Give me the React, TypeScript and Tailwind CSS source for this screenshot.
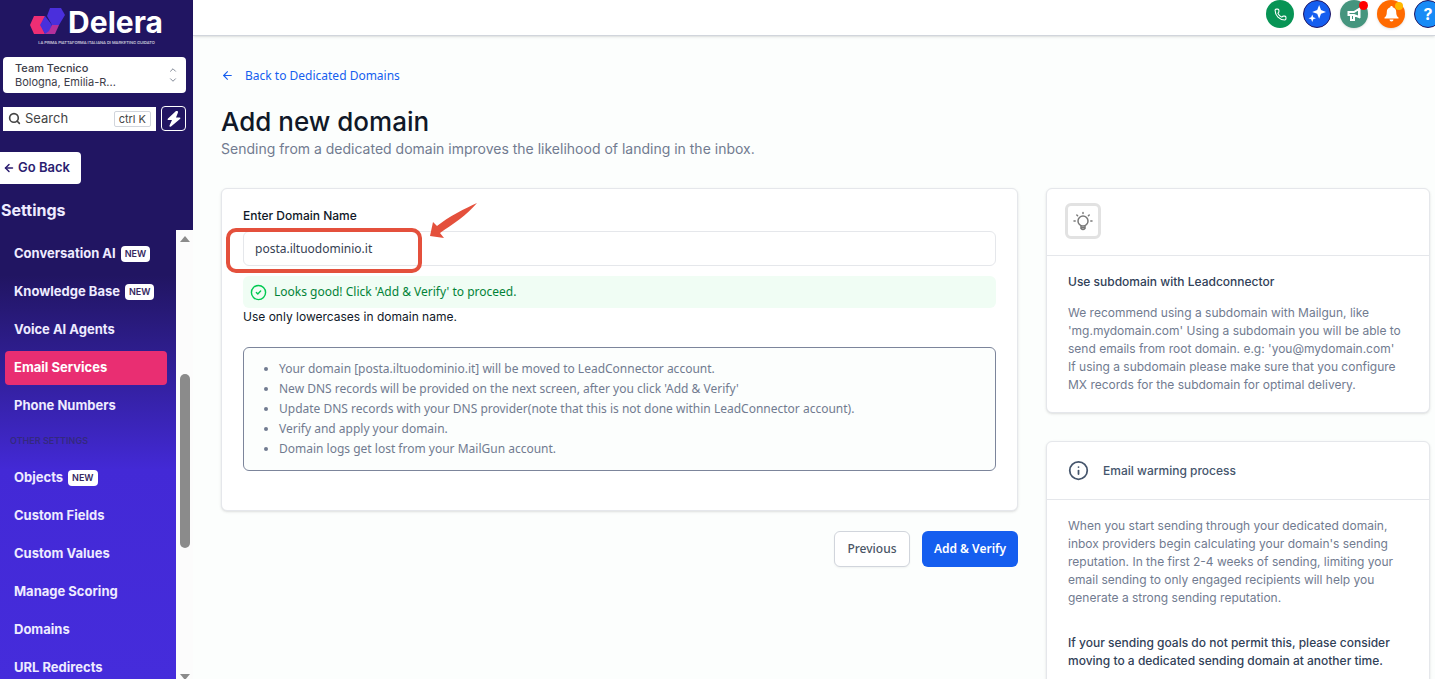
import type { ReactNode } from 'react'
import { ArrowLeft, ChevronDown, ChevronUp, CircleCheck, Info, Phone, Search } from 'lucide-react'

type NavItem = { label: string; isNew?: boolean; active?: boolean }

const MAIN_NAV: NavItem[] = [
  { label: 'Conversation AI', isNew: true },
  { label: 'Knowledge Base', isNew: true },
  { label: 'Voice AI Agents' },
  { label: 'Email Services', active: true },
  { label: 'Phone Numbers' },
]

const OTHER_NAV: NavItem[] = [
  { label: 'Objects', isNew: true },
  { label: 'Custom Fields' },
  { label: 'Custom Values' },
  { label: 'Manage Scoring' },
  { label: 'Domains' },
  { label: 'URL Redirects' },
]

const NOTES = [
  'Your domain [posta.iltuodominio.it] will be moved to LeadConnector account.',
  "New DNS records will be provided on the next screen, after you click 'Add & Verify'",
  'Update DNS records with your DNS provider(note that this is not done within LeadConnector account).',
  'Verify and apply your domain.',
  'Domain logs get lost from your MailGun account.',
]

function Logo() {
  return (
    <div className="flex flex-col items-center w-[134px] mx-auto">
      <div className="flex items-center gap-[3px]">
        <svg width="35" height="28" viewBox="0 0 35 28" className="shrink-0" aria-hidden="true">
          <path d="M20 0h11l4 7-6 10h-7l-5-9z" fill="#4a2fdc" />
          <path d="M4 8h11l-4 9 4 9H4L0 17z" fill="#ee2e74" />
          <path d="M22 17h7l-4 9H14z" fill="#b3309c" />
          <path d="M15 8l7 9-3 6-4 3-5-9z" fill="#4a2fdc" />
        </svg>
        <span className="text-[30px] leading-7 font-bold text-white">Delera</span>
      </div>
      <span className="mt-1 whitespace-nowrap text-[4px] leading-[6px] font-medium text-white/80">
        LA PRIMA PIATTAFORMA ITALIANA DI MARKETING GUIDATO
      </span>
    </div>
  )
}

function NavList({ items }: { items: NavItem[] }) {
  return (
    <ul className="flex flex-col gap-1 pl-[5px] pr-[9px]">
      {items.map(item => (
        <li key={item.label}>
          <a
            href="#"
            className={`flex items-center gap-[5px] h-[34px] pl-[9px] rounded text-[13px] font-bold whitespace-nowrap ${
              item.active ? 'bg-[#e92e72] text-white' : 'text-[#eeebff]'
            }`}
          >
            {item.label}
            {item.isNew && (
              <span className="h-4 px-1 rounded bg-white text-[#35285f] text-[9px] leading-4 font-semibold">NEW</span>
            )}
          </a>
        </li>
      ))}
    </ul>
  )
}

function Sidebar() {
  return (
    <aside className="w-[193px] shrink-0 flex flex-col bg-[#211562] font-[Inter,sans-serif]">
      <div className="h-[230px] shrink-0 pt-2">
        <Logo />
        <button className="mt-[11px] ml-[3px] w-[183px] h-9 pl-3 pr-2 flex items-center justify-between rounded bg-white text-left text-[#3c3c48]">
          <span className="text-[11px] leading-[14px]">
            <span className="block font-medium">Team Tecnico</span>
            <span className="block">Bologna, Emilia-R...</span>
          </span>
          <span className="flex flex-col text-gray-500">
            <ChevronUp size={10} />
            <ChevronDown size={10} />
          </span>
        </button>
        <div className="mt-[13px] ml-[3px] flex items-center gap-[5px]">
          <label className="w-[153px] h-6 px-[5px] flex items-center gap-1 bg-white text-[#444]">
            <Search size={13} strokeWidth={3} className="shrink-0" />
            <input
              type="text"
              placeholder="Search"
              aria-label="Search"
              className="min-w-0 flex-1 text-[13px] outline-none placeholder:text-[#444]"
            />
            <kbd className="h-4 px-1 border border-gray-300 rounded-xs text-[11px] leading-[14px] font-[Inter,sans-serif] whitespace-nowrap">
              ctrl K
            </kbd>
          </label>
          <button aria-label="Quick actions" className="size-[25px] flex items-center justify-center rounded border border-white">
            <svg width="14" height="16" viewBox="0 0 14 16" fill="#fff">
              <path d="M9 0L1 7.500q-1 1.500.5 1.500H5L2.500 14.500q-.3 2 1.500 1L13 8q1-1.500-.5-1.500H9L11 1.500Q11-.8 9 0z" />
            </svg>
          </button>
        </div>
        <button className="mt-[21px] h-8 w-[81px] pl-[3px] flex items-center gap-[3px] rounded-r bg-white text-[#2b1d70] text-[13px] font-semibold whitespace-nowrap">
          <ArrowLeft size={12} strokeWidth={3} />
          Go Back
        </button>
        <h2 className="mt-4 pl-px text-base leading-5 font-bold text-[#eeebff]">Settings</h2>
      </div>

      <div className="flex-1 min-h-0 flex">
        <nav className="flex-1 min-w-0 overflow-hidden pt-[7px] bg-linear-to-b from-[#211562] from-[45px] via-[#4329d6] via-[240px] to-[#452cdb]">
          <NavList items={MAIN_NAV} />
          <p className="h-[38px] pl-2.5 text-[9px] leading-[36px] font-semibold text-[#34297f]">OTHER SETTINGS</p>
          <NavList items={OTHER_NAV} />
        </nav>
        <div aria-hidden="true" className="w-[17px] shrink-0 flex flex-col items-center justify-between bg-[#fcfcfc] pt-1.5">
          <svg width="10" height="6" viewBox="0 0 10 6" fill="#8b8b8b"><path d="M5 0l5 6H0z" /></svg>
          <span className="w-2.5 h-[174px] mt-1.5 rounded-full bg-[#8b8b8b]" />
          <svg width="10" height="5" viewBox="0 0 10 5" fill="#8b8b8b"><path d="M0 0h10L5 6z" /></svg>
        </div>
      </div>
    </aside>
  )
}

function RoundButton({ label, color, children }: { label: string; color: string; children: ReactNode }) {
  return (
    <button aria-label={label} className={`relative size-7 shrink-0 flex items-center justify-center rounded-full text-white ${color}`}>
      {children}
    </button>
  )
}

function TopBar() {
  return (
    <header className="h-9 shrink-0 flex justify-end gap-[9px] overflow-hidden bg-white border-b border-gray-300 shadow-sm">
      <RoundButton label="Call" color="bg-[#079455]">
        <Phone size={13} strokeWidth={2} />
      </RoundButton>
      <RoundButton label="Assistant" color="bg-[#155eef] border border-[#211562]">
        <svg width="18" height="18" viewBox="0 0 17 17" fill="#fff">
          <path d="M10.500 0l1.800 4.700L17 6.500l-4.700 1.800L10.500 13 8.700 8.300 4 6.500l4.700-1.800z" />
          <path d="M4 9l1 2.500 2.500 1L5 13.500 4 16l-1-2.500-2.500-1 2.500-1z" />
        </svg>
      </RoundButton>
      <RoundButton label="Announcements" color="bg-[#45957e] shadow">
        <svg width="15" height="14" viewBox="0 0 15 14" fill="none" stroke="#fff" strokeWidth="2">
          <path d="M1.500 5H7l5-3v8L7 8H1.500zM4 8v5h3V8M12.500 1v10" />
        </svg>
        <span className="absolute top-px right-0 size-[9px] rounded-full bg-[#ff0000]" />
      </RoundButton>
      <RoundButton label="Notifications" color="bg-[#ff6a00] shadow">
        <svg width="15" height="16" viewBox="0 0 15 16" fill="#fff">
          <path d="M7.500 0c.8 0 1.200.5 1.200 1.200C11 1.800 12.200 3.500 12.200 6c0 3 .8 4.500 2.300 5.500v1H.5v-1C2 10.500 2.800 9 2.800 6c0-2.500 1.200-4.200 3.500-4.800C6.300.5 6.700 0 7.500 0zM5.500 13.500h4a2 2 0 0 1-4 0z" />
        </svg>
        <span className="absolute top-0.5 right-0.5 size-2 rounded-full bg-[#ffb800]" />
      </RoundButton>
      <div className="-mr-[7px] shrink-0">
        <RoundButton label="Help" color="bg-[#188bf6] border border-[#211562]">
          <span className="text-base leading-4 font-bold">?</span>
        </RoundButton>
      </div>
    </header>
  )
}

function DomainForm() {
  return (
    <section>
      <div className="px-[21px] pt-[18px] pb-[39px] bg-white rounded-md border border-gray-200 shadow-sm">
        <label htmlFor="domain" className="block text-xs leading-[18px] font-medium text-gray-900">
          Enter Domain Name
        </label>
        <div className="relative mt-1.5">
          <input
            id="domain"
            type="text"
            defaultValue="posta.iltuodominio.it"
            className="block w-full h-[35px] px-[11px] rounded-md border border-gray-200 bg-white font-['Noto_Sans',sans-serif] text-xs text-gray-700"
          />
          {/* Callout around the typed domain */}
          <div className="pointer-events-none absolute -top-[3px] -left-[17px] w-[196px] h-[45px] rounded-[10px] border-4 border-[#e4503c]" />
          <svg className="pointer-events-none absolute -top-7 left-[187px]" width="48" height="36" viewBox="0 0 48 36" fill="#e4503c">
            <path d="M47 0C36 5 18 14 7 23L3 19 0 33 14 35 10 30C23 21 37 12 47 0z" />
          </svg>
        </div>
        <p className="mt-2.5 h-8 pl-[7px] flex items-center gap-[7px] rounded-md bg-[#f0fdf4] font-['Noto_Sans',sans-serif] text-xs text-green-700">
          <CircleCheck size={17} strokeWidth={2} className="text-green-500" />
          Looks good! Click 'Add &amp; Verify' to proceed.
        </p>
        <p className="text-xs leading-[18px] text-gray-900">Use only lowercases in domain name.</p>
        <ul className="mt-[21px] py-[11px] pl-[35px] pr-3 list-disc rounded-md border border-[#7c859b] bg-[#fcfefd] font-['Noto_Sans',sans-serif] text-xs leading-5 text-[#717b90]">
          {NOTES.map(note => (
            <li key={note}>{note}</li>
          ))}
        </ul>
      </div>
      <div className="mt-5 flex justify-end gap-3 font-['Noto_Sans',sans-serif] text-xs">
        <button className="h-9 w-[76px] rounded-md border border-gray-300 bg-white font-medium text-gray-600 shadow-xs">
          Previous
        </button>
        <button className="h-9 w-24 rounded-md bg-[#155eef] font-semibold text-white whitespace-nowrap">Add &amp; Verify</button>
      </div>
    </section>
  )
}

function HelpCard({ header, children }: { header: ReactNode; children: ReactNode }) {
  return (
    <section className="bg-white rounded-md border border-gray-200 shadow-sm text-xs leading-[18px] text-[#717b90]">
      {header}
      <div className="px-[21px] pt-[17px] pb-[18px] border-t border-gray-200">{children}</div>
    </section>
  )
}

export default function App() {
  return (
    <div className="h-screen flex overflow-hidden bg-[#fcfefd] font-[Inter,sans-serif]">
      <Sidebar />
      <div className="flex-1 min-w-0 flex flex-col">
        <TopBar />
        <main className="flex-1 min-h-0 overflow-hidden pl-7 pr-[5px] pt-7">
          <a href="#" className="inline-flex items-center gap-[11px] font-['Noto_Sans',sans-serif] text-xs leading-[18px] text-[#155eef]">
            <ArrowLeft size={13} />
            Back to Dedicated Domains
          </a>
          <h1 className="mt-4 text-[26px] leading-[35px] font-medium text-gray-900">Add new domain</h1>
          <p className="text-sm leading-5 text-[#717b90]">
            Sending from a dedicated domain improves the likelihood of landing in the inbox.
          </p>

          <div className="mt-[29px] flex items-start gap-7">
            <div className="flex-1 min-w-0">
              <DomainForm />
            </div>
            <div className="w-96 shrink-0 flex flex-col gap-7">
              <HelpCard
                header={
                  <div className="h-[66px] px-[18px] pt-[14px]">
                    <span className="size-9 flex items-center justify-center rounded-md border-3 border-[#e2e2e2]">
                      <svg width="20" height="20" viewBox="0 0 20 20" fill="none" stroke="#7a7a7a" strokeWidth="1.500" strokeLinecap="round">
                        <circle cx="10" cy="10" r="5" />
                        <path d="M8 15v2.500q2 2 4 0V15M8.500 16.500h3M10 1.500v1M3.800 4l.8.8M16.200 4l-.8.800M1 10h1.200M17.800 10H19" />
                      </svg>
                    </span>
                  </div>
                }
              >
                <h2 className="font-medium text-slate-700">Use subdomain with Leadconnector</h2>
                <p className="mt-[13px]">
                  We recommend using a subdomain with Mailgun, like 'mg.mydomain.com' Using a subdomain you will be able to
                  send emails from root domain. e.g: 'you@mydomain.com'
                  <br />
                  If using a subdomain please make sure that you configure MX records for the subdomain for optimal
                  delivery.
                </p>
              </HelpCard>
              <HelpCard
                header={
                  <div className="h-[57px] px-[21px] flex items-center gap-[14px]">
                    <Info size={21} strokeWidth={2} className="text-slate-600" />
                    <h2 className="font-medium text-slate-600">Email warming process</h2>
                  </div>
                }
              >
                <p>
                  When you start sending through your dedicated domain, inbox providers begin calculating your domain's
                  sending reputation. In the first 2-4 weeks of sending, limiting your email sending to only engaged
                  recipients will help you generate a strong sending reputation.
                </p>
                <p className="mt-[27px] font-medium text-slate-700">
                  If your sending goals do not permit this, please consider moving to a dedicated sending domain at
                  another time.
                </p>
              </HelpCard>
            </div>
          </div>
        </main>
      </div>
    </div>
  )
}
